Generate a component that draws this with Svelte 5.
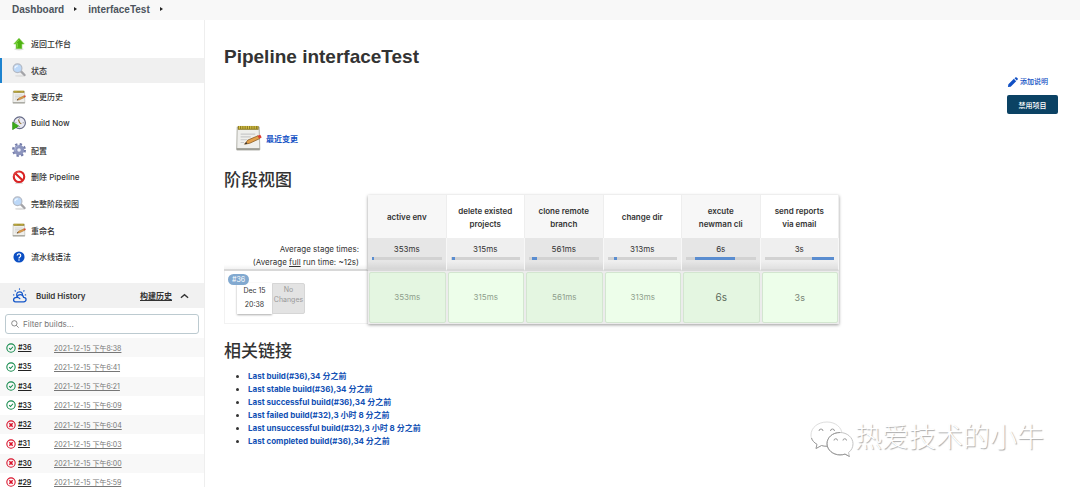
<script>
  let filter = $state("");

  const tasks = [
    { icon: "up", label: "返回工作台" },
    { icon: "search", label: "状态", active: true },
    { icon: "notepad", label: "变更历史" },
    { icon: "clock", label: "Build Now" },
    { icon: "gear", label: "配置" },
    { icon: "stop", label: "删除 Pipeline" },
    { icon: "search", label: "完整阶段视图" },
    { icon: "notepad", label: "重命名" },
    { icon: "help", label: "流水线语法" },
  ];

  const builds = [
    { id: 36, time: "2021-12-15 下午8:38", ok: true },
    { id: 35, time: "2021-12-15 下午6:41", ok: true },
    { id: 34, time: "2021-12-15 下午6:21", ok: true },
    { id: 33, time: "2021-12-15 下午6:09", ok: true },
    { id: 32, time: "2021-12-15 下午6:04", ok: false },
    { id: 31, time: "2021-12-15 下午6:03", ok: false },
    { id: 30, time: "2021-12-15 下午6:00", ok: false },
    { id: 29, time: "2021-12-15 下午5:59", ok: false },
  ];

  // start and size are percentages of the whole run
  const stages = [
    { name: "active env", time: "353ms", start: 0, size: 3 },
    { name: "delete existed projects", time: "315ms", start: 2, size: 4 },
    { name: "clone remote branch", time: "561ms", start: 5, size: 6 },
    { name: "change dir", time: "313ms", start: 10, size: 4 },
    { name: "excute newman cli", time: "6s", start: 13, size: 57, level: "high" },
    { name: "send reports via email", time: "3s", start: 68, size: 32, level: "mid" },
  ];

  const links = [
    "Last build(#36),34 分之前",
    "Last stable build(#36),34 分之前",
    "Last successful build(#36),34 分之前",
    "Last failed build(#32),3 小时 8 分之前",
    "Last unsuccessful build(#32),3 小时 8 分之前",
    "Last completed build(#36),34 分之前",
  ];

  let shown = $derived(builds.filter((b) => ("#" + b.id + b.time).includes(filter)));
</script>

{#snippet icon(name)}
  <svg class="icon" viewBox="0 0 24 24" aria-hidden="true">
    {#if name === "up"}
      <ellipse cx="12" cy="21" rx="8" ry="2" fill="#e2e2e2" />
      <path d="M12 2 21 12H17V20H7V12H3Z" fill="#4fb312" stroke="#83cf55" />
      <path d="M12 5 6 11H9.500V18" fill="none" stroke="#7fd840" stroke-width="1.500" />
    {:else if name === "search"}
      <ellipse cx="14" cy="22" rx="9" ry="2" fill="#e0e0e0" />
      <path d="m15 14 6.500 6.500" stroke="#a4a4a8" stroke-width="4" stroke-linecap="round" />
      <circle cx="9.500" cy="9" r="7.500" fill="#bcd8f8" stroke="#b3b9c4" stroke-width="2" />
      <path d="M5 9a5 5 0 0 1 5-4" fill="none" stroke="#eef6ff" stroke-width="2" />
    {:else if name === "notepad"}
      <path d="M2 2.500H21.500L22 22H1.500Z" fill="#efefec" stroke="#b9b9b2" />
      <path d="M1.500 22H22" stroke="#9c9c94" stroke-width="2" />
      <path d="M2.500 3H21" stroke="#8d7b22" stroke-width="3.400" />
      <path d="M3.500 2.500H20" stroke="#d8c44a" stroke-width="2.400" stroke-dasharray="1 1" />
      <path d="M5 8.500H18M5 11H14M5 13.500H11M5 16H8" stroke="#c9c9c9" />
      <path d="m8.500 17.500 3-3.700 9-3.800 1.500 2.500-9 4.200Z" fill="#e3a04a" stroke="#8a5a20" stroke-width=".7" />
      <path d="m8.500 17.500 1.500-2 1 1.500Z" fill="#333" />
      <path d="m20 10 2.500-1 1.200 2.500-2 1Z" fill="#dd3c31" />
    {:else if name === "clock"}
      <circle cx="13" cy="11.500" r="10" fill="#e9e9f3" stroke="#666b87" stroke-width="2" />
      <path d="M13 4v1.500M13 17.500V19M6 11.500h1.500M18.500 11.500H20" stroke="#777" stroke-width="1.500" />
      <path d="m11 6 2 5.500 3 2" fill="none" stroke="#927431" stroke-width="2" />
      <path d="M1 10.500 11.500 17 1 23.500Z" fill="#3cad18" stroke="#268b10" />
    {:else if name === "gear"}
      <circle cx="12" cy="12" r="10" fill="none" stroke="#747ca9" stroke-width="4" stroke-dasharray="3.900 3.954" />
      <circle cx="12" cy="12" r="6" fill="#eef0f8" stroke="#8c94bd" stroke-width="6" />
      <path d="M5.500 14a7 7 0 0 1 6.500-9.500" fill="none" stroke="#b4bcdb" stroke-width="1.500" />
    {:else if name === "stop"}
      <ellipse cx="12" cy="22.500" rx="7" ry="1.500" fill="#ddd" />
      <circle cx="12" cy="11.500" r="9" fill="#fff" stroke="#d92324" stroke-width="3.600" />
      <path d="m5.500 5.500 13 12.500" stroke="#d92324" stroke-width="3.600" />
      <path d="M3 11A9 9 0 0 1 12 2.500" fill="none" stroke="#ee706e" />
    {:else if name === "help"}
      <circle cx="12" cy="12" r="9.500" fill="#0b4fc4" />
      <path d="M9 9.500a3 3 0 1 1 4.500 2.700c-1.200.7-1.500 1.200-1.500 2.300" fill="none" stroke="#fff" stroke-width="2" />
      <circle cx="12" cy="17.300" r="1.300" fill="#fff" />
    {/if}
  </svg>
{/snippet}

<div class="page">
  <nav class="breadcrumbs">
    <a href="#dashboard">Dashboard</a>
    <svg viewBox="0 0 4 6"><path d="M0 1 3 3 0 5Z" fill="#222" /></svg>
    <a href="#job">interfaceTest</a>
    <svg viewBox="0 0 4 6"><path d="M0 1 3 3 0 5Z" fill="#222" /></svg>
  </nav>

  <div class="body">
    <aside>
      <ul class="tasks">
        {#each tasks as task}
          <li>
            <a href="#task" class:active={task.active}>
              {@render icon(task.icon)}
              <span>{task.label}</span>
            </a>
          </li>
        {/each}
      </ul>

      <div class="history-head">
        <svg class="weather" viewBox="0 0 24 24" fill="none" stroke="#1557c9" stroke-width="2" stroke-linecap="round" stroke-linejoin="round" aria-hidden="true">
          <path d="M5.500 22h13c2.500 0 4-1.500 4-3.500S21 15 18.500 15c-.5-3-2.500-4.500-5-4.500S8.500 12.500 8 15c-3 0-5.500 1-5.500 3.700C2.500 20.500 3.500 22 5.500 22Z" />
          <path d="M8 13.500C6.500 9 8.500 6 12 6s5.500 2.500 4.500 6M8 15c2 0 3.500.5 4.500 2" />
          <path d="M12 1.500v.3M5 4.500l.3.300M19.200 4.500l-.3.300M2.500 11h.4M21.300 11h.4" />
        </svg>
        <strong>Build History</strong>
        <a href="#trend">构建历史</a>
        <svg class="chevron" viewBox="0 0 10 6" fill="none" stroke="#333" stroke-width="1.500"><path d="M1 5 5 1.500 9 5" /></svg>
      </div>

      <label class="filter">
        <svg viewBox="0 0 12 12" fill="none" stroke="#555" aria-hidden="true">
          <circle cx="5" cy="5" r="4" /><path d="m8 8 3.500 3.500" />
        </svg>
        <input type="text" aria-label="Filter builds" placeholder="Filter builds..." bind:value={filter} />
      </label>

      <table class="builds">
        <tbody>
          {#each shown as build}
            <tr>
              <td class="status">
                <svg viewBox="0 0 12 12" fill="none" stroke={build.ok ? "#138a4b" : "#d9122b"} stroke-width="1.300">
                  <circle cx="6" cy="6" r="5" />
                  {#if build.ok}
                    <path d="m3.800 6.200 1.600 1.600 3-3.300" />
                  {:else}
                    <path d="m4 4 4 4M8 4 4 8" stroke-width="1.800" />
                  {/if}
                </svg>
              </td>
              <td class="number"><a href="#build">#{build.id}</a></td>
              <td class="time"><a href="#build">{build.time}</a></td>
            </tr>
          {/each}
        </tbody>
      </table>
    </aside>

    <main>
      <h1>Pipeline interfaceTest</h1>

      <div class="actions">
        <div class="actions-inner">
          <a href="#edit">
            <svg viewBox="0 0 12 12" fill="#1150c4" aria-hidden="true">
              <path d="m1 11 .5-3L7.500 2l2.500 2.500-6 6ZM8.200 1.300 9 .5q.8-.7 1.600 0l.9.900q.7.800 0 1.600l-.8.800Z" />
            </svg>
            添加说明
          </a>
          <button>禁用项目</button>
        </div>
      </div>

      <a class="changes" href="#changes">
        {@render icon("notepad")}
        <span>最近变更</span>
      </a>

      <h2>阶段视图</h2>
      <table class="stages">
        <thead>
          <tr class="names">
            <td></td>
            {#each stages as stage}
              <th>{stage.name}</th>
            {/each}
          </tr>
          <tr class="totals">
            <td>Average stage times:<br />(Average <u>full</u> run time: ~12s)</td>
            {#each stages as stage}
              <td>
                {stage.time}
                <div class="bar">
                  <div style="margin-left: {stage.start}%; width: {stage.size}%"></div>
                </div>
              </td>
            {/each}
          </tr>
        </thead>
        <tbody>
          <tr class="run">
            <td>
              <span class="badge">#36</span>
              <div class="run-info">
                <div class="date">Dec 15<br />20:38</div>
                <div class="nochange">No<br />Changes</div>
              </div>
            </td>
            {#each stages as stage}
              <td class="cell"><div class={stage.level}>{stage.time}</div></td>
            {/each}
          </tr>
        </tbody>
      </table>

      <h2>相关链接</h2>
      <ul class="links">
        {#each links as link}
          <li><a href="#permalink">{link}</a></li>
        {/each}
      </ul>
    </main>
  </div>

  <div class="watermark">
    <svg viewBox="0 0 44 38" fill="#fff" stroke="#c4c4c4" aria-hidden="true">
      <path d="M17 3C8 3 1 8.500 1 16c0 4 2.300 7 6 9.300L6 29.500l5.500-3c2 .6 4 .8 6 .8 8 0 14.500-5 14.500-12C32 8.500 25.500 3 17 3Z" stroke="#dedede" />
      <path d="M1.500 19c.8 2.700 2.700 4.700 5.500 6.300L6 29.500l5.500-3c1.500.5 3.500.8 5.500.8" stroke="#999" />
      <path d="M9 12a2 2 0 0 1 4 0M20.500 12a2 2 0 0 1 4 0" fill="none" stroke="#999" />
      <path d="M30 13.500c-7.500 0-13 5-13 11.200s6 11.200 13 11.200c2 0 3.500-.3 5-.8l4.500 2.400-1-4c3-2 4.500-5.300 4.500-8.800 0-6.200-6-11.200-13-11.200Z" />
      <path d="M30 13.500c-7.500 0-13 5-13 11.200s6 11.200 13 11.200c2 0 3.500-.3 5-.8l4.500 2.400" fill="none" stroke="#999" />
      <path d="M24 21.500a1.500 1.500 0 0 1 3.500 0M33 21.500a1.500 1.500 0 0 1 3.500 0" fill="none" stroke="#999" />
    </svg>
    <span>热爱技术的小牛</span>
  </div>
</div>

<style>
  :global(body) { background: #fff; overflow: hidden; }
  * { box-sizing: border-box; }
  .page {
    position: relative;
    height: 100vh;
    overflow: hidden;
    font-family: Inter, "Noto Sans CJK SC", sans-serif;
    font-size: 8px;
    color: #333;
  }
  a { color: inherit; text-decoration: none; }
  ul { margin: 0; padding: 0; list-style: none; }
  table { border-collapse: separate; border-spacing: 0; }
  td, th { padding: 0; }
  svg { flex: none; display: block; }

  .breadcrumbs {
    display: flex;
    align-items: center;
    height: 20px;
    padding: 0 12px 2px;
    gap: 10px;
    background: #f8f8f8;
    font: bold 10px "Liberation Sans", sans-serif;
    color: #4d545d;
  }
  .breadcrumbs svg { width: 4px; height: 6px; }

  .body { display: flex; }
  aside { flex: none; width: 205px; border-right: 1px solid #eee; }

  .tasks {
    display: grid;
    grid-auto-rows: 1fr;
    height: 240px;
    margin: 11px 0 12px;
    font-weight: 500;
  }
  .tasks a {
    display: flex;
    align-items: center;
    gap: 5px;
    height: 25px;
    padding-left: 10px;
    border-left: 2px solid transparent;
  }
  .tasks .active { background: #f0f0f0; border-color: #1d83cf; }
  .icon { width: 14px; height: 14px; }

  .history-head {
    display: flex;
    align-items: center;
    height: 25px;
    padding: 0 15px 0 12px;
    background: #f1f1f1;
    font-weight: 600;
  }
  .history-head strong { flex: 1; font-weight: 600; }
  .history-head a { text-decoration: underline; }
  .weather { width: 15px; height: 15px; margin-right: 9px; }
  .chevron { width: 9px; height: 6px; margin-left: 8px; }

  .filter {
    display: flex;
    align-items: center;
    gap: 4px;
    height: 20px;
    margin: 6px 5px 4px;
    padding: 0 5px;
    border: 1px solid #bccad0;
    border-radius: 3px;
  }
  .filter svg { width: 8px; height: 8px; }
  .filter input {
    flex: 1;
    min-width: 0;
    padding: 0;
    border: 0;
    outline: 0;
    background: none;
    font: inherit;
  }
  .filter input::placeholder { color: #777; }

  .builds { width: 100%; height: 154px; font-size: 7px; }
  .builds tr:nth-child(odd) td { background: #f8f8f8; }
  .builds a { text-decoration: underline; }
  .status { width: 18px; padding-left: 6px; }
  .status svg { width: 10px; height: 10px; }
  .number { width: 36px; color: #222; font-weight: 600; }
  .time { color: #777; }

  main { flex: 1; min-width: 0; padding: 25px 22px 0 19px; }
  h1 { margin: 0; font: bold 19px/24px "Liberation Sans", sans-serif; }
  h2 { margin: 0; font-size: 17px; line-height: 24px; font-weight: 500; }

  .actions { display: flex; justify-content: flex-end; margin-top: 7px; }
  .actions-inner { display: flex; flex-direction: column; gap: 7px; font-size: 7px; }
  .actions a {
    display: flex;
    align-items: center;
    gap: 2px;
    line-height: 12px;
    color: #1150c4;
    font-weight: 500;
  }
  .actions svg { width: 11px; height: 11px; }
  .actions button {
    width: 51px;
    height: 19px;
    padding: 0;
    border: 0;
    border-radius: 2px;
    background: #0b4264;
    color: #fff;
    font: inherit;
    font-weight: 500;
  }

  .changes {
    display: inline-flex;
    align-items: center;
    gap: 4px;
    margin: 10px 0 16px 11px;
    color: #1150c4;
    font-weight: 600;
    vertical-align: top;
  }
  .changes .icon { width: 27px; height: 28px; }

  .stages {
    position: relative;
    width: 615px;
    max-width: 100%;
    margin: 3px 0 15px;
    table-layout: fixed;
    text-align: center;
  }
  /* raised panel over the stage columns */
  .stages::after {
    content: "";
    position: absolute;
    inset: 0 0 0 144px;
    box-shadow: 0 1px 3px #0006;
    pointer-events: none;
  }
  .stages td:first-child { width: 144px; }
  .names > * { height: 43px; }
  .names th {
    padding: 2px 9px 0;
    border-right: 1px solid #eee;
    line-height: 13px;
    font-weight: 600;
  }
  .names th:nth-child(even) { background: #f7f7f7; }
  .totals td {
    height: 31px;
    padding: 5px 4px 0;
    border-right: 1px solid #f7f7f7;
    border-bottom: 2px solid #d8d8d8;
    background: linear-gradient(#efefef 75%, #e0e0e0);
    line-height: 13px;
    vertical-align: top;
  }
  .totals td:nth-child(even) { background: linear-gradient(#e6e6e6 75%, #d6d6d6); }
  .totals td:first-child {
    padding: 5px 8px 0 0;
    background: linear-gradient(#fff 85%, #f2f2f2);
    text-align: right;
    white-space: nowrap;
  }
  .bar { height: 3px; margin-top: 1px; background: #d2d2d2; }
  .bar div { height: 3px; background: #5a8dd0; }

  .run td:first-child {
    border: 1px solid #f2f2f2;
    border-width: 0 0 1px 1px;
    vertical-align: top;
    text-align: left;
  }
  .badge {
    position: absolute;
    top: 79px;
    left: 4px;
    z-index: 1;
    padding: 0 4px;
    border-radius: 6px;
    background: #82a9d0;
    color: #fff;
    font-size: 7px;
    line-height: 11px;
  }
  .run-info {
    display: flex;
    margin: 12px 0 0 12px;
    font-size: 7px;
    text-align: center;
  }
  .date { width: 35px; line-height: 14px; padding: 1px 0 2px; box-shadow: 0 1px 2px #0005; }
  .nochange {
    width: 33px;
    border: 1px solid #d6d6d6;
    border-radius: 0 2px 2px 0;
    background: #e3e3e3;
    color: #999;
    line-height: 10px;
    padding-top: 1px;
  }
  .cell { padding: 1px; background: #ececec; }
  .cell div {
    height: 51px;
    border: 1px solid #d3e6d0;
    border-radius: 2px;
    background: #edfeea;
    color: #8e9e8c;
    line-height: 49px;
  }
  .cell:nth-child(even) div { background: #e4f6e1; }
  .cell .mid { font-size: 9px; color: #788576; }
  .cell .high { font-size: 10px; color: #5c6a5b; }

  .links { margin-top: 7px; padding-left: 24px; list-style: disc; line-height: 13px; }
  .links a { color: #1150b4; font-weight: 700; }
  .links li { height: 13px; }

  .watermark {
    position: absolute;
    right: 36px;
    bottom: 30px;
    display: flex;
    align-items: center;
    gap: 1px;
    color: #fff;
    font-size: 27px;
    font-weight: 300;
    line-height: 36px;
    text-shadow: 1px 1px 1px #aaa;
  }
  .watermark svg { width: 44px; height: 38px; }
</style>
